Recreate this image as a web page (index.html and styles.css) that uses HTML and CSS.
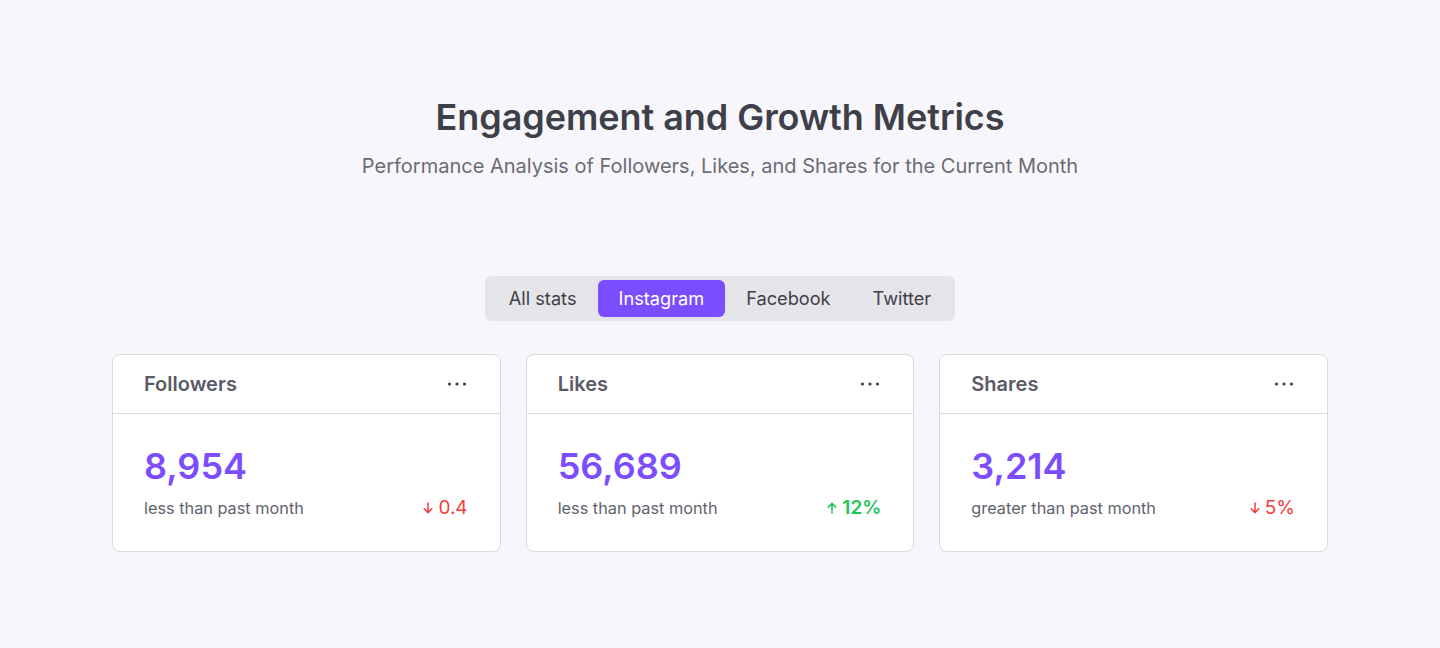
FILE: index.html
```html
<!DOCTYPE html>
<html lang="en">
<head>
<meta charset="utf-8">
<title>Engagement and Growth Metrics</title>
<link rel="stylesheet" href="styles.css">
</head>
<body>
<main class="page">
  <header class="intro">
    <h1 class="title">Engagement and Growth Metrics</h1>
    <p class="subtitle">Performance Analysis of Followers, Likes, and Shares for the Current Month</p>
  </header>

  <nav class="tabs">
    <button class="tab">All stats</button>
    <button class="tab tab-active">Instagram</button>
    <button class="tab">Facebook</button>
    <button class="tab">Twitter</button>
  </nav>

  <section class="cards">
    <article class="card">
      <div class="card-head">
        <span class="card-title">Followers</span>
        <svg class="more" width="20" height="4" viewBox="0 0 20 4"><circle cx="2.5" cy="2" r="1.6"/><circle cx="10" cy="2" r="1.6"/><circle cx="17.5" cy="2" r="1.6"/></svg>
      </div>
      <div class="card-body">
        <div class="value">8,954</div>
        <div class="meta">
          <span class="label">less than past month</span>
          <span class="delta down">
            <svg width="10" height="12" viewBox="0 0 10 12"><path d="M5 1v9.5M1.2 6.8L5 10.6l3.8-3.8" fill="none" stroke="currentColor" stroke-width="1.5" stroke-linecap="round" stroke-linejoin="round"/></svg>
            0.4
          </span>
        </div>
      </div>
    </article>

    <article class="card">
      <div class="card-head">
        <span class="card-title">Likes</span>
        <svg class="more" width="20" height="4" viewBox="0 0 20 4"><circle cx="2.5" cy="2" r="1.6"/><circle cx="10" cy="2" r="1.6"/><circle cx="17.5" cy="2" r="1.6"/></svg>
      </div>
      <div class="card-body">
        <div class="value">56,689</div>
        <div class="meta">
          <span class="label">less than past month</span>
          <span class="delta up">
            <svg width="10" height="12" viewBox="0 0 10 12"><path d="M5 11V1.5M1.2 5.2L5 1.4l3.8 3.8" fill="none" stroke="currentColor" stroke-width="1.5" stroke-linecap="round" stroke-linejoin="round"/></svg>
            12%
          </span>
        </div>
      </div>
    </article>

    <article class="card">
      <div class="card-head">
        <span class="card-title">Shares</span>
        <svg class="more" width="20" height="4" viewBox="0 0 20 4"><circle cx="2.5" cy="2" r="1.6"/><circle cx="10" cy="2" r="1.6"/><circle cx="17.5" cy="2" r="1.6"/></svg>
      </div>
      <div class="card-body">
        <div class="value">3,214</div>
        <div class="meta">
          <span class="label">greater than past month</span>
          <span class="delta down">
            <svg width="10" height="12" viewBox="0 0 10 12"><path d="M5 1v9.5M1.2 6.8L5 10.6l3.8-3.8" fill="none" stroke="currentColor" stroke-width="1.5" stroke-linecap="round" stroke-linejoin="round"/></svg>
            5%
          </span>
        </div>
      </div>
    </article>
  </section>
</main>
</body>
</html>
```

FILE: styles.css
```css
* { box-sizing: border-box; }

html, body {
  margin: 0;
  padding: 0;
}

body {
  background: #f7f7fb;
  font-family: Inter, "Noto Sans", "Liberation Sans", sans-serif;
  color: #3f3f46;
  height: 648px;
}

.page {
  display: flex;
  flex-direction: column;
  align-items: center;
  padding-top: 95px;
}

.intro {
  text-align: center;
}

.title {
  margin: 0;
  font-size: 36px;
  line-height: 44px;
  font-weight: 600;
  color: #3f3f4a;
  letter-spacing: -0.05px;
}

.subtitle {
  margin: 13px 0 0;
  font-size: 20px;
  line-height: 28px;
  color: #6b6b76;
}

.tabs {
  margin-top: 96px;
  display: flex;
  padding: 4px 3px;
  background: #e4e4e9;
  border-radius: 6px;
}

.tab {
  font-family: inherit;
  font-size: 18.2px;
  line-height: 25px;
  color: #3f3f4a;
  background: transparent;
  border: 0;
  border-radius: 6px;
  padding: 6px 21px;
  cursor: pointer;
}

.tab-active {
  background: #7c4dff;
  color: #ffffff;
}

.cards {
  margin-top: 33px;
  width: 1216px;
  display: grid;
  grid-template-columns: repeat(3, 1fr);
  gap: 25px;
}

.card {
  background: #ffffff;
  border: 1px solid #d9d9de;
  border-radius: 8px;
  height: 198px;
  display: flex;
  flex-direction: column;
}

.card-head {
  height: 59px;
  display: flex;
  align-items: center;
  justify-content: space-between;
  padding: 0 32px 0 31px;
  border-bottom: 1px solid #d9d9de;
}

.card-title {
  font-size: 20px;
  font-weight: 600;
  color: #5a5a66;
}

.more {
  fill: #3f3f4a;
  margin-right: 1px;
}

.card-body {
  padding: 30px 32px 0 31px;
}

.value {
  font-size: 36px;
  line-height: 44px;
  font-weight: 600;
  color: #7c4dff;
}

.meta {
  margin-top: 9px;
  display: flex;
  justify-content: space-between;
  align-items: center;
}

.label {
  font-size: 16.3px;
  line-height: 22px;
  color: #62626d;
}

.delta {
  display: flex;
  align-items: center;
  gap: 5px;
  font-size: 19px;
  line-height: 22px;
}

.delta.down { color: #f23d3d; }
.delta.up { color: #1dc45a; font-weight: 600; }
```
